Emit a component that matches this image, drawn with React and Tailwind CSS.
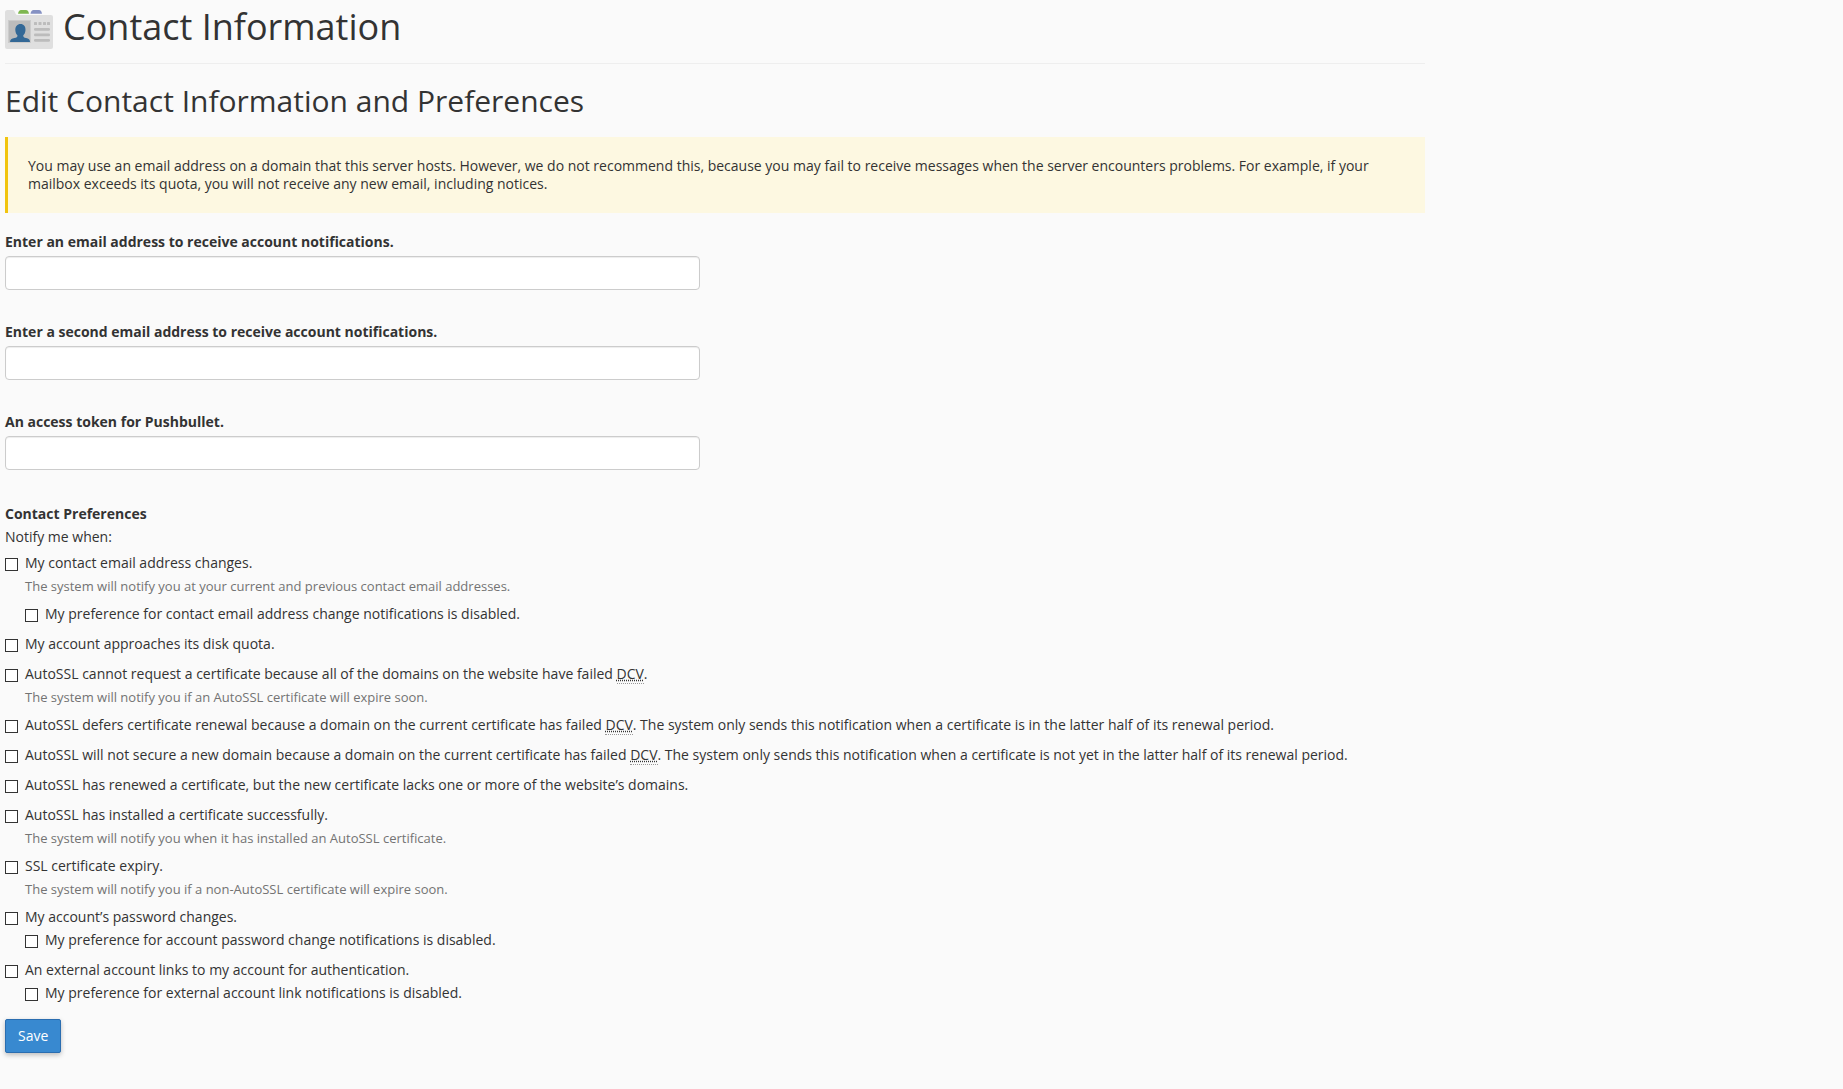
import React from 'react';

function ContactIcon() {
  return (
    <svg width="48" height="40" viewBox="0 0 48 40" className="shrink-0" aria-hidden="true">
      <path d="M0 2.5A2.5 2.5 0 0 1 2.500 0H7.500C9.500 0 9.800 2 10.500 3.500C11 4.700 11.700 5 13 5H46A2 2 0 0 1 48 7V37A2 2 0 0 1 46 39H2A2 2 0 0 1 0 37Z" fill="#dfdfdf" />
      <path d="M13 3.700C13.300 1.500 14.500 0 16 0H21C22.600 0 23.700 1.500 24 3.700Z" fill="#7fb751" />
      <path d="M25.500 3.700C25.800 1.500 27 0 28.500 0H34C35.600 0 36.700 1.500 37 3.700Z" fill="#8591c3" />
      <rect x="3" y="10" width="23" height="23" fill="#cbcbcb" />
      <rect x="4" y="11" width="21" height="21" fill="#bcbcbc" />
      <path d="M15.500 14C18.700 14 20.700 16.500 20.500 20C20.400 22.700 19.200 24.500 18.200 25.500C18.200 27.200 19.200 27.500 21 28C23.800 28.700 25 29.600 25 32H5C5 29.600 6.500 28.700 9.500 28C11.500 27.500 12.500 27.200 12.500 25.500C11.500 24.500 10.400 22.700 10.300 20C10.200 16.500 12.300 14 15.500 14Z" fill="#336896" />
      <g fill="#bcbcbc">
        <rect x="29" y="12" width="3" height="3" rx="0.500" />
        <rect x="33.500" y="12" width="3" height="3" rx="0.500" />
        <rect x="38" y="12" width="3" height="3" rx="0.500" />
        <rect x="42" y="12" width="3" height="3" rx="0.500" />
        <rect x="29" y="18" width="16" height="2.700" rx="1.300" />
        <rect x="29" y="23.500" width="16" height="2.700" rx="1.300" />
        <rect x="29" y="29" width="16" height="2.700" rx="1.300" />
      </g>
    </svg>
  );
}

function Field({ id, label }) {
  return (
    <div className="w-1/2 pr-[15px]">
      <label htmlFor={id} className="mb-[5px] block font-bold">{label}</label>
      <input
        id={id}
        type="text"
        className="block h-[34px] w-full rounded border border-[#cccccc] bg-white px-3 shadow-[inset_0_1px_1px_rgba(0,0,0,0.075)]"
      />
    </div>
  );
}

function Check({ id, children }) {
  return (
    <div className="flex items-start gap-[7px]">
      <input
        id={id}
        type="checkbox"
        className="mt-[5px] h-[13px] w-[13px] shrink-0 appearance-none border border-[#333333] bg-white checked:bg-[#333333]"
      />
      <label htmlFor={id} className="leading-5">{children}</label>
    </div>
  );
}

function Hint({ children }) {
  return <p className="mt-[5px] pl-5 text-[13px] leading-4 text-[#737373]">{children}</p>;
}

function Dcv() {
  return (
    <abbr
      title="Domain Control Validation"
      className="cursor-help border-b border-dotted border-[#999999] underline decoration-dotted"
    >
      DCV
    </abbr>
  );
}

export default function App() {
  return (
    <div className="min-h-screen bg-[#fafafa] font-['Open_Sans',sans-serif] text-[14px] leading-[18px] text-[#333333]">
      <main className="max-w-[1430px] px-[5px] pb-8">
        <header className="flex items-start gap-[10px] border-b border-[#eeeeee] pb-[13px]">
          <div className="pt-[10px]">
            <ContactIcon />
          </div>
          <h1 className="pt-[7px] text-[36px] leading-[40px]">Contact Information</h1>
        </header>

        <h2 className="mt-5 text-[30px] leading-[34px]">Edit Contact Information and Preferences</h2>

        <div className="mt-[19px] border-l-[3px] border-[#f1c40f] bg-[#fdf8e1] p-5">
          You may use an email address on a domain that this server hosts. However, we do not recommend this, because you may fail to receive messages when the server encounters problems. For example, if your mailbox exceeds its quota, you will not receive any new email, including notices.
        </div>

        <form onSubmit={(e) => e.preventDefault()}>
          <div className="mt-5 flex flex-col gap-[33px]">
            <Field id="email" label="Enter an email address to receive account notifications." />
            <Field id="second-email" label="Enter a second email address to receive account notifications." />
            <Field id="pushbullet" label="An access token for Pushbullet." />
          </div>

          <fieldset className="mt-[35px]">
            <legend className="mb-[5px] font-bold">Contact Preferences</legend>
            <p>Notify me when:</p>

            <div className="mt-[7px] flex flex-col gap-[10px]">
              <div>
                <Check id="notify-email">My contact email address changes.</Check>
                <Hint>The system will notify you at your current and previous contact email addresses.</Hint>
                <div className="mt-[10px] pl-5">
                  <Check id="notify-email-off">My preference for contact email address change notifications is disabled.</Check>
                </div>
              </div>
              <Check id="notify-quota">My account approaches its disk quota.</Check>
              <div>
                <Check id="autossl-request">
                  AutoSSL cannot request a certificate because all of the domains on the website have failed <Dcv />.
                </Check>
                <Hint>The system will notify you if an AutoSSL certificate will expire soon.</Hint>
              </div>
              <Check id="autossl-defer">
                AutoSSL defers certificate renewal because a domain on the current certificate has failed <Dcv />. The system only sends this notification when a certificate is in the latter half of its renewal period.
              </Check>
              <Check id="autossl-new-domain">
                AutoSSL will not secure a new domain because a domain on the current certificate has failed <Dcv />. The system only sends this notification when a certificate is not yet in the latter half of its renewal period.
              </Check>
              <Check id="autossl-renewed">
                AutoSSL has renewed a certificate, but the new certificate lacks one or more of the website’s domains.
              </Check>
              <div>
                <Check id="autossl-installed">AutoSSL has installed a certificate successfully.</Check>
                <Hint>The system will notify you when it has installed an AutoSSL certificate.</Hint>
              </div>
              <div>
                <Check id="ssl-expiry">SSL certificate expiry.</Check>
                <Hint>The system will notify you if a non-AutoSSL certificate will expire soon.</Hint>
              </div>
              <div>
                <Check id="notify-password">My account’s password changes.</Check>
                <div className="mt-[3px] pl-5">
                  <Check id="notify-password-off">My preference for account password change notifications is disabled.</Check>
                </div>
              </div>
              <div>
                <Check id="notify-link">An external account links to my account for authentication.</Check>
                <div className="mt-[3px] pl-5">
                  <Check id="notify-link-off">My preference for external account link notifications is disabled.</Check>
                </div>
              </div>
            </div>
          </fieldset>

          <button
            type="submit"
            className="mt-4 block h-[34px] rounded-[2px] border border-[#2a6db0] bg-[#3889d0] px-3 text-white shadow-[0_2px_5px_rgba(0,0,0,0.25)]"
          >
            Save
          </button>
        </form>
      </main>
    </div>
  );
}
